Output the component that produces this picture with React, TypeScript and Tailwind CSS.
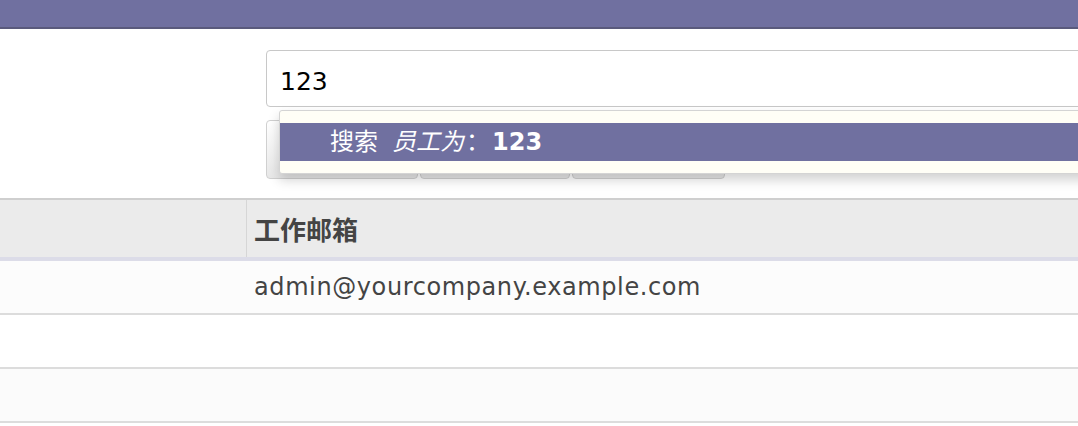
import React from "react";

const font = { fontFamily: '"DejaVu Sans", "Noto Sans CJK SC", sans-serif' };

const rows = [
  { email: "admin@yourcompany.example.com", bg: "bg-[#fcfcfc]" },
  { email: "", bg: "bg-white" },
  { email: "", bg: "bg-[#fbfbfb]" },
];

function SearchDropdown() {
  return (
    <div className="absolute left-[279px] top-[81px] h-[64px] w-[900px] rounded-[3px] border border-[#d4d4d4] bg-[#fffef6] pt-[12px] shadow-[0_6px_12px_rgba(0,0,0,0.18)]">
      <div className="flex h-[38px] items-center bg-[#7070a0] pl-[50px] text-[24px] text-white">
        <span>搜索</span>
        <em className="ml-[14px] italic">员工为</em>
        <span className="mx-[2px]">：</span>
        <b className="font-bold">123</b>
      </div>
    </div>
  );
}

export default function App() {
  return (
    <div className="h-[426px] w-[1078px] overflow-hidden bg-white" style={font}>
      <div className="h-[29px] border-b-2 border-[#5a5a7c] bg-[#7070a0]" />

      <div className="relative h-[169px]">
        <div className="pl-[266px] pt-[21px]">
          <div className="flex h-[57px] w-[900px] items-center rounded-[4px] border border-[#c8c8c8] bg-white pl-[13px] pt-[7px] text-[25px] text-black">
            123
          </div>
          <div className="mt-[13px] flex gap-[2px]">
            {[152, 150, 153].map((w, i) => (
              <div
                key={i}
                className="h-[59px] rounded-[4px] border border-[#d0d0d0] bg-gradient-to-b from-white to-[#e8e8e8]"
                style={{ width: w }}
              />
            ))}
          </div>
        </div>
        <SearchDropdown />
      </div>

      <div className="border-t-2 border-[#cfcfcf]">
        <div className="flex h-[61px] border-b-4 border-[#dcdce8] bg-[#ebebeb] text-[26px] font-bold text-[#444]">
          <div className="w-[247px] border-r border-[#d6d6d6]" />
          <div className="flex items-center pl-[7px]" style={{ fontFamily: '"Noto Sans CJK SC", sans-serif' }}>
            工作邮箱
          </div>
        </div>
        {rows.map((r, i) => (
          <div key={i} className={`flex h-[54px] border-b-2 border-[#dcdcdc] ${r.bg}`}>
            <div className="w-[247px]" />
            <div className="flex items-center pl-[7px] text-[24px] tracking-[0.6px] text-[#444]">{r.email}</div>
          </div>
        ))}
      </div>
    </div>
  );
}
